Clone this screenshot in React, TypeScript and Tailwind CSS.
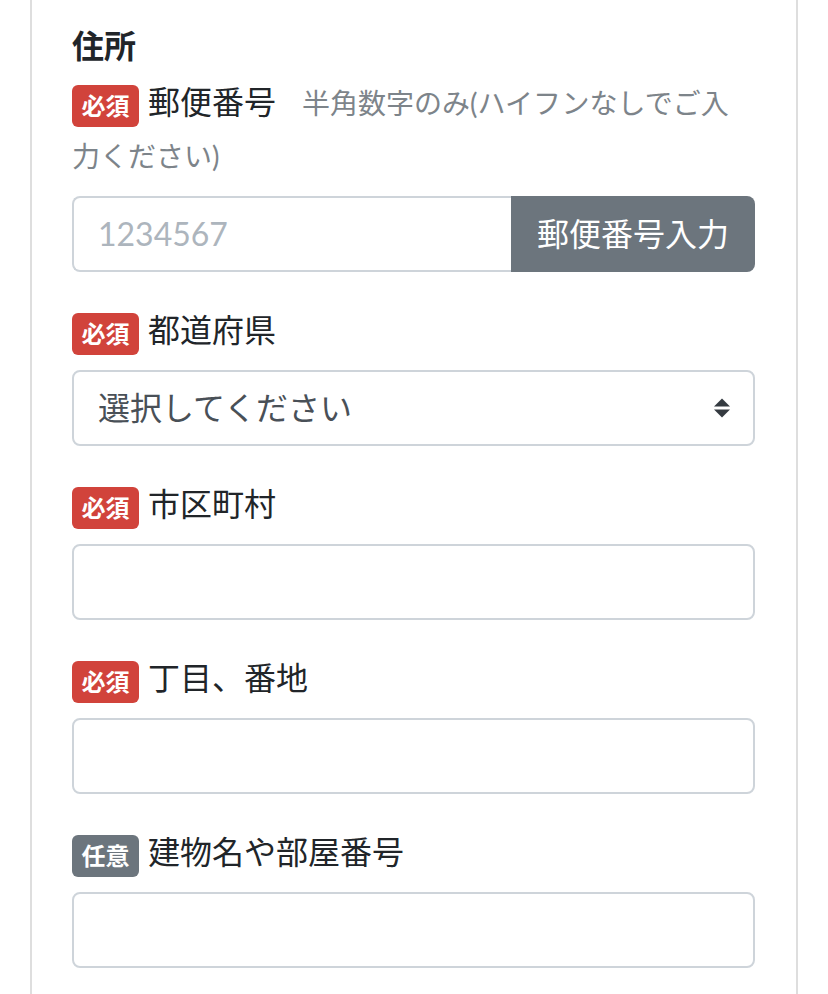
const FONT = "font-['Lato','Noto_Sans_CJK_JP',sans-serif]";

function Badge({ kind }: { kind: "required" | "optional" }) {
  const required = kind === "required";
  return (
    <span
      className={
        "inline-flex h-[42px] w-[67px] items-center justify-center rounded-[6px] align-middle text-[24px] font-bold leading-none text-white mr-[9px] " +
        (required ? "bg-[#d1433b]" : "bg-[#6c757d]")
      }
    >
      {required ? "必須" : "任意"}
    </span>
  );
}

function FieldLabel({ kind, text, hint }: { kind: "required" | "optional"; text: string; hint?: string }) {
  return (
    <div className="mb-[14px] text-[32px] leading-[52px] text-[#212529]">
      <Badge kind={kind} />
      <span>{text}</span>
      {hint && <span className="ml-[26px] text-[28px] text-[#7d848a]">{hint}</span>}
    </div>
  );
}

function TextInput({ placeholder }: { placeholder?: string }) {
  return (
    <div className="flex h-[76px] items-center rounded-[8px] border-2 border-[#ced4da] bg-white px-[24px] text-[32px] text-[#adb5bd]">
      {placeholder}
    </div>
  );
}

function SelectBox() {
  return (
    <div className="flex h-[76px] items-center justify-between rounded-[8px] border-2 border-[#ced4da] bg-white pl-[24px] pr-[23px] text-[32px] text-[#495057]">
      <span>選択してください</span>
      <svg width="16" height="20" viewBox="0 0 16 20" className="text-[#343a40]">
        <path d="M0 8.5 L8 0.5 L16 8.5 Z" fill="currentColor" />
        <path d="M0 11.5 L16 11.5 L8 19.5 Z" fill="currentColor" />
      </svg>
    </div>
  );
}

export default function App() {
  return (
    <div className={`h-[994px] w-[828px] overflow-hidden bg-white ${FONT}`}>
      <div className="ml-[30px] h-full w-[768px] border-x-2 border-[#dedede] pl-[40px] pr-[41px] pt-[22px]">
        <h2 className="mb-[6px] text-[32px] font-bold leading-[48px] text-[#212529]">住所</h2>

        <FieldLabel kind="required" text="郵便番号" hint="半角数字のみ(ハイフンなしでご入力ください)" />
        <div className="flex">
          <div className="flex h-[76px] flex-1 items-center rounded-l-[8px] border-2 border-r-0 border-[#ced4da] bg-white px-[24px] text-[32px] text-[#adb5bd]">
            1234567
          </div>
          <button className="h-[76px] rounded-r-[8px] bg-[#6c757d] px-[26px] text-[32px] text-white">
            郵便番号入力
          </button>
        </div>

        <div className="mt-[32px]">
          <FieldLabel kind="required" text="都道府県" />
          <SelectBox />
        </div>

        <div className="mt-[32px]">
          <FieldLabel kind="required" text="市区町村" />
          <TextInput />
        </div>

        <div className="mt-[32px]">
          <FieldLabel kind="required" text="丁目、番地" />
          <TextInput />
        </div>

        <div className="mt-[32px]">
          <FieldLabel kind="optional" text="建物名や部屋番号" />
          <TextInput />
        </div>
      </div>
    </div>
  );
}
